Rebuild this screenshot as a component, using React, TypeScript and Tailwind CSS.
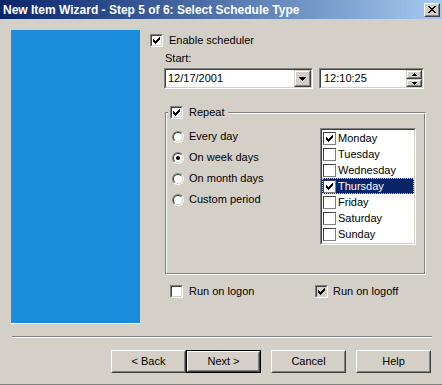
import React, { FC, ReactNode } from "react";

const CHECK =
  "M6 0h1v1h-1z M5 1h2v1h-2z M0 2h1v1h-1z M4 2h3v1h-3z M0 3h2v1h-2z M3 3h3v1h-3z M0 4h5v1h-5z M1 5h3v1h-3z M2 6h1v1h-1z";

const CLOSE =
  "M0 0h2v1h-2z M6 0h2v1h-2z M1 1h2v1h-2z M5 1h2v1h-2z M2 2h4v1h-4z M3 3h2v1h-2z M2 4h4v1h-4z M1 5h2v1h-2z M5 5h2v1h-2z M0 6h2v1h-2z M6 6h2v1h-2z";

const CheckMark: FC<{ color?: string }> = ({ color = "#000" }) => (
  <svg width="7" height="7" viewBox="0 0 7 7" shapeRendering="crispEdges">
    <path d={CHECK} fill={color} />
  </svg>
);

// classic sunken 3D checkbox, 13x13
const Checkbox: FC<{ checked?: boolean; gray?: boolean }> = ({
  checked,
  gray,
}) => (
  <div className="w-[13px] h-[13px] shrink-0 border border-t-[#808080] border-l-[#808080] border-b-white border-r-white">
    <div
      className={
        "w-full h-full flex items-center justify-center border border-t-[#404040] border-l-[#404040] border-b-[#d4d0c8] border-r-[#d4d0c8] " +
        (gray ? "bg-[#d4d0c8]" : "bg-white")
      }
    >
      {checked && <CheckMark />}
    </div>
  </div>
);

const Radio: FC<{ checked?: boolean }> = ({ checked }) => (
  <div className="w-[12px] h-[12px] shrink-0 rounded-full border border-t-[#808080] border-l-[#808080] border-b-white border-r-white">
    <div className="w-full h-full rounded-full bg-white flex items-center justify-center border border-t-[#404040] border-l-[#404040] border-b-[#d4d0c8] border-r-[#d4d0c8]">
      {checked && <div className="w-[4px] h-[4px] rounded-full bg-black" />}
    </div>
  </div>
);

const Sunken: FC<{ className?: string; children?: ReactNode }> = ({
  className = "",
  children,
}) => (
  <div
    className={
      "border border-t-[#808080] border-l-[#808080] border-b-white border-r-white " +
      className
    }
  >
    <div className="w-full h-full flex border border-t-[#404040] border-l-[#404040] border-b-[#d4d0c8] border-r-[#d4d0c8] bg-white">
      {children}
    </div>
  </div>
);

const SmallRaised: FC<{ className?: string; children?: ReactNode }> = ({
  className = "",
  children,
}) => (
  <div
    className={
      "border border-t-[#d4d0c8] border-l-[#d4d0c8] border-b-[#404040] border-r-[#404040] bg-[#d4d0c8] " +
      className
    }
  >
    <div className="w-full h-full flex items-center justify-center border border-t-white border-l-white border-b-[#808080] border-r-[#808080]">
      {children}
    </div>
  </div>
);

const Button: FC<{ label: string; isDefault?: boolean }> = ({
  label,
  isDefault,
}) => (
  <div
    className={
      "w-[75px] h-[23px] " + (isDefault ? "border border-black" : "")
    }
  >
    <div className="w-full h-full border border-t-white border-l-white border-b-[#404040] border-r-[#404040]">
      <div className="w-full h-full flex items-center justify-center border border-t-[#d4d0c8] border-l-[#d4d0c8] border-b-[#808080] border-r-[#808080]">
        {label}
      </div>
    </div>
  </div>
);

const days = [
  { name: "Monday", checked: true },
  { name: "Tuesday" },
  { name: "Wednesday" },
  { name: "Thursday", checked: true, selected: true },
  { name: "Friday" },
  { name: "Saturday" },
  { name: "Sunday" },
];

const radios = [
  { label: "Every day" },
  { label: "On week days", checked: true },
  { label: "On month days" },
  { label: "Custom period" },
];

export default function App() {
  return (
    <div className="w-[442px] h-[385px] bg-[#d4d0c8] flex flex-col font-['Liberation_Sans',Arial,sans-serif] text-[11px] leading-[13px] text-black border-b border-[#808080] overflow-hidden">
      {/* title bar */}
      <div className="h-[19px] shrink-0 flex items-center bg-gradient-to-r from-[#0a246a] to-[#a6caf0] pl-[3px] pr-[2px]">
        <span className="flex-1 text-white font-bold text-[12px] leading-[14px]">
          New Item Wizard - Step 5 of 6: Select Schedule Type
        </span>
        <div className="w-[16px] h-[14px] border border-t-white border-l-white border-b-[#404040] border-r-[#404040] bg-[#d4d0c8]">
          <div className="w-full h-full flex items-center justify-center border border-t-[#d4d0c8] border-l-[#d4d0c8] border-b-[#808080] border-r-[#808080]">
            <svg width="8" height="7" viewBox="0 0 8 7" shapeRendering="crispEdges">
              <path d={CLOSE} fill="#000" />
            </svg>
          </div>
        </div>
      </div>

      {/* main area */}
      <div className="h-[317px] shrink-0 flex">
        <div className="ml-[11px] mt-[11px] w-[129px] h-[294px] bg-[#1b8bdb] border-b border-white" />

        <div className="ml-[10px] mt-[15px] flex flex-col">
          <div className="flex items-center gap-[6px] h-[13px]">
            <Checkbox checked />
            <span>Enable scheduler</span>
          </div>

          <div className="ml-[15px] mt-[5px] h-[13px]">Start:</div>

          <div className="ml-[14px] mt-[3px] flex gap-[6px]">
            <Sunken className="w-[149px] h-[21px]">
              <span className="flex-1 self-center pl-[2px]">12/17/2001</span>
              <SmallRaised className="w-[17px] h-[17px]">
                <svg width="7" height="4" viewBox="0 0 7 4" shapeRendering="crispEdges">
                  <path d="M0 0h7v1h-7z M1 1h5v1h-5z M2 2h3v1h-3z M3 3h1v1h-1z" fill="#000" />
                </svg>
              </SmallRaised>
            </Sunken>
            <Sunken className="w-[105px] h-[21px]">
              <span className="flex-1 self-center pl-[3px]">12:10:25</span>
              <div className="flex flex-col w-[16px]">
                <SmallRaised className="h-[9px]">
                  <svg width="5" height="3" viewBox="0 0 5 3" shapeRendering="crispEdges">
                    <path d="M2 0h1v1h-1z M1 1h3v1h-3z M0 2h5v1h-5z" fill="#000" />
                  </svg>
                </SmallRaised>
                <SmallRaised className="h-[8px]">
                  <svg width="5" height="3" viewBox="0 0 5 3" shapeRendering="crispEdges">
                    <path d="M0 0h5v1h-5z M1 1h3v1h-3z M2 2h1v1h-1z" fill="#000" />
                  </svg>
                </SmallRaised>
              </div>
            </Sunken>
          </div>

          {/* Repeat group */}
          <div className="relative ml-[15px] mt-[23px] w-[261px] h-[163px] border border-t-[#808080] border-l-[#808080] border-b-white border-r-white">
            <div className="w-full h-full flex border border-t-white border-l-white border-b-[#808080] border-r-[#808080]">
              <div className="ml-[5px] pt-[16px] w-[148px] flex flex-col gap-[8px]">
                {radios.map((r) => (
                  <div key={r.label} className="flex items-center gap-[5px] h-[13px]">
                    <Radio checked={r.checked} />
                    <span>{r.label}</span>
                  </div>
                ))}
              </div>
              <Sunken className="mt-[14px] w-[96px] h-[117px]">
                <div className="flex flex-col w-full">
                  {days.map((d) => (
                    <div
                      key={d.name}
                      className={
                        "h-[16px] flex items-center gap-[2px] pl-[1px] " +
                        (d.selected
                          ? "bg-[#0a246a] text-white outline outline-1 outline-dotted outline-[#d4d0c8] -outline-offset-1"
                          : "")
                      }
                    >
                      <div className="w-[13px] h-[13px] bg-white border border-t-[#404040] border-l-[#404040] border-b-[#808080] border-r-[#808080] flex items-center justify-center">
                        {d.checked && <CheckMark />}
                      </div>
                      <span>{d.name}</span>
                    </div>
                  ))}
                </div>
              </Sunken>
            </div>
            <div className="absolute left-[2px] top-[-7px] flex items-center gap-[6px] bg-[#d4d0c8] px-[2px] pr-[4px] h-[13px]">
              <Checkbox checked />
              <span>Repeat</span>
            </div>
          </div>

          <div className="mt-[10px] flex h-[13px]">
            <div className="ml-[20px] w-[145px] flex items-center gap-[6px]">
              <Checkbox />
              <span>Run on logon</span>
            </div>
            <div className="flex items-center gap-[5px]">
              <Checkbox checked gray />
              <span>Run on logoff</span>
            </div>
          </div>
        </div>
      </div>

      {/* separator */}
      <div className="ml-[12px] w-[420px] h-[2px] border-t border-t-[#808080] border-b border-b-white" />

      {/* buttons */}
      <div className="mt-[12px] ml-[111px] flex">
        <Button label="< Back" />
        <Button label="Next >" isDefault />
        <div className="ml-[10px]">
          <Button label="Cancel" />
        </div>
        <div className="ml-[10px]">
          <Button label="Help" />
        </div>
      </div>
    </div>
  );
}
